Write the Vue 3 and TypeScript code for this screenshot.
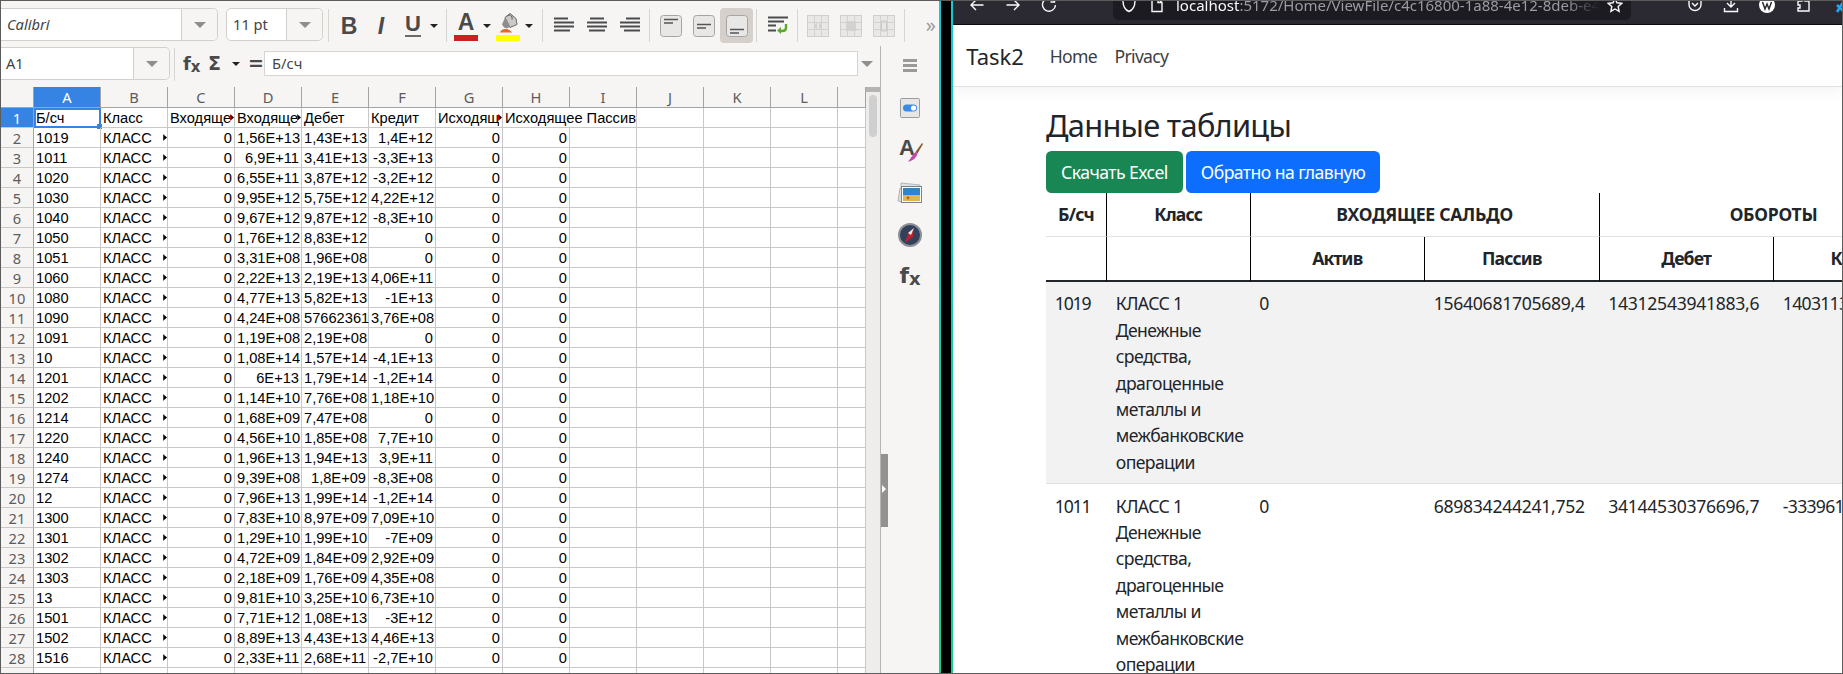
<script setup lang="ts">
interface SheetRow {
  acc: string
  inPas: string
  debit: string
  credit: string
}

const columns = ['A', 'B', 'C', 'D', 'E', 'F', 'G', 'H', 'I', 'J', 'K', 'L']

const sheetRows: SheetRow[] = [
  { acc: '1019', inPas: '1,56E+13', debit: '1,43E+13', credit: '1,4E+12' },
  { acc: '1011', inPas: '6,9E+11', debit: '3,41E+13', credit: '-3,3E+13' },
  { acc: '1020', inPas: '6,55E+11', debit: '3,87E+12', credit: '-3,2E+12' },
  { acc: '1030', inPas: '9,95E+12', debit: '5,75E+12', credit: '4,22E+12' },
  { acc: '1040', inPas: '9,67E+12', debit: '9,87E+12', credit: '-8,3E+10' },
  { acc: '1050', inPas: '1,76E+12', debit: '8,83E+12', credit: '0' },
  { acc: '1051', inPas: '3,31E+08', debit: '1,96E+08', credit: '0' },
  { acc: '1060', inPas: '2,22E+13', debit: '2,19E+13', credit: '4,06E+11' },
  { acc: '1080', inPas: '4,77E+13', debit: '5,82E+13', credit: '-1E+13' },
  { acc: '1090', inPas: '4,24E+08', debit: '57662361', credit: '3,76E+08' },
  { acc: '1091', inPas: '1,19E+08', debit: '2,19E+08', credit: '0' },
  { acc: '10', inPas: '1,08E+14', debit: '1,57E+14', credit: '-4,1E+13' },
  { acc: '1201', inPas: '6E+13', debit: '1,79E+14', credit: '-1,2E+14' },
  { acc: '1202', inPas: '1,14E+10', debit: '7,76E+08', credit: '1,18E+10' },
  { acc: '1214', inPas: '1,68E+09', debit: '7,47E+08', credit: '0' },
  { acc: '1220', inPas: '4,56E+10', debit: '1,85E+08', credit: '7,7E+10' },
  { acc: '1240', inPas: '1,96E+13', debit: '1,94E+13', credit: '3,9E+11' },
  { acc: '1274', inPas: '9,39E+08', debit: '1,8E+09', credit: '-8,3E+08' },
  { acc: '12', inPas: '7,96E+13', debit: '1,99E+14', credit: '-1,2E+14' },
  { acc: '1300', inPas: '7,83E+10', debit: '8,97E+09', credit: '7,09E+10' },
  { acc: '1301', inPas: '1,29E+10', debit: '1,99E+10', credit: '-7E+09' },
  { acc: '1302', inPas: '4,72E+09', debit: '1,84E+09', credit: '2,92E+09' },
  { acc: '1303', inPas: '2,18E+09', debit: '1,76E+09', credit: '4,35E+08' },
  { acc: '13', inPas: '9,81E+10', debit: '3,25E+10', credit: '6,73E+10' },
  { acc: '1501', inPas: '7,71E+12', debit: '1,08E+13', credit: '-3E+12' },
  { acc: '1502', inPas: '8,89E+13', debit: '4,43E+13', credit: '4,46E+13' },
  { acc: '1516', inPas: '2,33E+11', debit: '2,68E+11', credit: '-2,7E+10' },
  { acc: '1520', inPas: '4,57E+12', debit: '3,13E+12', credit: '0' }
]

const classLines = ['КЛАСС 1', 'Денежные', 'средства,', 'драгоценные', 'металлы и', 'межбанковские', 'операции']

const tableRows = [
  { acc: '1019', active: '0', passive: '15640681705689,4', debit: '14312543941883,6', credit: '1403113763805,8' },
  { acc: '1011', active: '0', passive: '689834244241,752', debit: '34144530376696,7', credit: '-33396113213455,0' }
]
</script>

<template>
  <div class="screen">
    <!-- LibreOffice Calc -->
    <section class="calc">
      <div class="toolbar">
        <div class="combo font-combo"><i class="combo-text">Calibri</i><span class="combo-arrow"><b class="tri-gray"></b></span></div>
        <div class="combo size-combo"><span class="combo-text">11 pt</span><span class="combo-arrow"><b class="tri-gray"></b></span></div>
        <span class="sep sep-first"></span>
        <span class="tb tb-text"><span class="glyph-b">B</span></span>
        <span class="tb tb-text"><span class="glyph-i">I</span></span>
        <span class="tb tb-text"><span class="glyph-u">U</span></span>
        <span class="drop"><b class="tri-black"></b></span>
        <span class="sep sep-wide"></span>
        <span class="tb tb-text">
          <span class="color-btn"><span class="glyph-a">A</span><span class="bar bar-red"></span></span>
        </span>
        <span class="drop"><b class="tri-black"></b></span>
        <span class="tb tb-text">
          <span class="color-btn">
            <svg width="22" height="20" viewBox="0 0 22 20">
              <path d="M8 5l5-4 6 5 1 6-7 3z" fill="#c9c9c9" stroke="#6a6a6a" />
              <path d="M10 4c2-3 6-1 5 3" fill="none" stroke="#555" />
              <path d="M5 12l3-7 5 9c-3 3-6 2-8-2z" fill="#8e8e8e" />
              <path d="M3 20c1-4 8-5 12 0z" fill="#e8682a" />
            </svg>
            <span class="bar bar-yellow"></span>
          </span>
        </span>
        <span class="drop"><b class="tri-black"></b></span>
        <span class="sep sep-color"></span>

        <span class="tb"><svg width="20" height="18" viewBox="0 0 20 18"><path d="M0 1.5h14M0 5.5h20M0 9.5h20M0 13.5h16" stroke="#4c4c4c" stroke-width="2" /></svg></span>
        <span class="tb"><svg width="20" height="18" viewBox="0 0 20 18"><path d="M3 1.5h14M0 5.5h20M0 9.5h20M2 13.5h16" stroke="#4c4c4c" stroke-width="2" /></svg></span>
        <span class="tb"><svg width="20" height="18" viewBox="0 0 20 18"><path d="M6 1.5h14M0 5.5h20M0 9.5h20M4 13.5h16" stroke="#4c4c4c" stroke-width="2" /></svg></span>
        <span class="sep"></span>

        <span class="tb"><svg width="22" height="22" viewBox="0 0 22 22"><rect x=".5" y=".5" width="21" height="21" rx="3" fill="#e8e7e5" stroke="#a5a5a5" /><path d="M4 4.5h14M4 8h9" stroke="#555" stroke-width="1.5" /></svg></span>
        <span class="tb"><svg width="22" height="22" viewBox="0 0 22 22"><rect x=".5" y=".5" width="21" height="21" rx="3" fill="#e8e7e5" stroke="#a5a5a5" /><path d="M4 9.5h14M4 13h9" stroke="#555" stroke-width="1.5" /></svg></span>
        <span class="tb tb-on"><svg width="22" height="22" viewBox="0 0 22 22"><rect x=".5" y=".5" width="21" height="21" rx="3" fill="#e8e7e5" stroke="#a5a5a5" /><path d="M4 14.5h14M4 18h9" stroke="#555" stroke-width="1.5" /></svg></span>
        <span class="sep"></span>

        <span class="tb"><svg width="22" height="20" viewBox="0 0 22 20"><path d="M1 1.5h20M1 5.5h16M1 9.5h8M1 14.5h8" stroke="#4c4c4c" stroke-width="2" /><path d="M19 8v4c0 2-2 3-4 3h-2" fill="none" stroke="#5fa82f" stroke-width="2.4" /><path d="M14 11v7l-4-3.500z" fill="#5fa82f" /></svg></span>
        <span class="sep sep-wrap"></span>

        <span v-for="m in 3" :key="m" class="tb">
          <svg width="22" height="22" viewBox="0 0 22 22">
            <rect x=".5" y=".5" width="21" height="21" fill="#e9e8e6" stroke="#cfcfcf" />
            <path d="M.5 7.500h21M.5 14.500h21M7.500 .5v21M14.500 .5v21" stroke="#d2d2d2" />
            <rect v-if="m === 2" x="6" y="6" width="10" height="10" fill="#d2d2d2" />
            <path v-if="m === 1" d="M10 7l-3 4 3 4zM12 7l3 4-3 4z" fill="#d2d2d2" />
            <path v-if="m === 3" d="M8.500 6h5v10h-5z" fill="none" stroke="#c8c8c8" />
          </svg>
        </span>
        <span class="sep sep-last"></span>
        <span class="more">»</span>
      </div>

      <div class="calc-body">
        <div class="calc-main">
          <div class="formula-bar">
            <div class="combo name-combo"><span class="name-text">A1</span><span class="combo-arrow"><b class="tri-gray"></b></span></div>
            <span class="sep formula-sep"></span>
            <span class="fx">f<sub>x</sub></span>
            <span class="sigma">Σ</span>
            <span class="drop"><b class="tri-black"></b></span>
            <span class="equals">=</span>
            <div class="formula-input">Б/сч</div>
            <b class="tri-gray formula-arrow"></b>
          </div>

          <div class="sheet-wrap">
            <div class="sheet">
              <div class="row col-head">
                <div class="cell corner"></div>
                <div v-for="c in columns" :key="c" class="cell col-label" :class="{ picked: c === 'A' }">{{ c }}</div>
                <div class="cell col-label"></div>
              </div>

              <div class="row">
                <div class="cell row-label picked">1</div>
                <div class="cell current">Б/сч</div>
                <div class="cell">Класс</div>
                <div class="cell clipped"><span>Входящее Актив</span></div>
                <div class="cell clipped"><span>Входящее Пассив</span></div>
                <div class="cell">Дебет</div>
                <div class="cell">Кредит</div>
                <div class="cell clipped"><span>Исходящее Актив</span></div>
                <div class="cell spill">Исходящее Пассив</div>
                <div class="cell"></div>
                <div class="cell"></div>
                <div class="cell"></div>
                <div class="cell"></div>
                <div class="cell"></div>
              </div>

              <div v-for="(r, i) in sheetRows" :key="r.acc" class="row">
                <div class="cell row-label">{{ i + 2 }}</div>
                <div class="cell">{{ r.acc }}</div>
                <div class="cell clipped"><span>КЛАСС</span></div>
                <div class="cell num">0</div>
                <div class="cell num">{{ r.inPas }}</div>
                <div class="cell num">{{ r.debit }}</div>
                <div class="cell num">{{ r.credit }}</div>
                <div class="cell num">0</div>
                <div class="cell num">0</div>
                <div class="cell"></div>
                <div class="cell"></div>
                <div class="cell"></div>
                <div class="cell"></div>
                <div class="cell"></div>
              </div>
            </div>

            <div class="vscroll">
              <span class="vscroll-top"></span>
              <span class="vscroll-thumb"></span>
            </div>
          </div>
        </div>

        <aside class="sidebar">
          <span class="handle"></span>
          <span class="burger"></span>
          <svg class="side-icon" width="22" height="22" viewBox="0 0 22 22">
            <rect x="1.500" y="1.500" width="19" height="19" rx="1" fill="#e6e6e6" stroke="#9c9c9c" />
            <rect x="4" y="7.500" width="14" height="7" rx="3.500" fill="#3b8ae6" />
            <circle cx="14.500" cy="11" r="2.600" fill="#fff" />
          </svg>
          <svg class="side-icon" width="26" height="26" viewBox="0 0 26 26">
            <text x="2" y="18" class="styles-a">A</text>
            <path d="M26 7l-1-1-6.500 9 2 1.500z" fill="#8a5a2c" />
            <path d="M18.500 15l2 1.500c-1 4-4 7-9.500 8.500 2.500-3 4-7 7.500-10z" fill="#c04ba8" />
          </svg>
          <svg class="side-icon" width="26" height="24" viewBox="0 0 26 24">
            <path d="M4 2l19 2v2H4z" fill="#dfe3e6" stroke="#9aa0a5" stroke-width=".7" />
            <path d="M1 20L3 7l4 1-2 13z" fill="#dcdcdc" stroke="#a0a0a0" stroke-width=".7" />
            <rect x="4.500" y="5.500" width="20" height="16" fill="#fff" stroke="#7b8288" />
            <rect x="6" y="7" width="17" height="7" fill="#2f86c7" />
            <rect x="6" y="14" width="17" height="6" fill="#eeb04f" />
            <circle cx="11" cy="17" r="1.400" fill="#d9502c" />
          </svg>
          <svg class="side-icon" width="24" height="24" viewBox="0 0 24 24">
            <circle cx="12" cy="12" r="11" fill="#33405c" stroke="#8c8f94" stroke-width="2" />
            <path d="M16 5l-1 9-8 6 3-10z" fill="#b8222a" />
            <path d="M16 5l-6 5 3 2z" fill="#e9e9e9" />
          </svg>
          <span class="fx fx-side">f<sub>x</sub></span>
        </aside>
      </div>
    </section>

    <div class="divider"></div>

    <!-- Firefox -->
    <section class="browser">
      <div class="chrome">
        <div class="chrome-row">
          <svg class="ci" viewBox="0 0 16 16"><path d="M14.500 8H2M7 3L2 8l5 5" /></svg>
          <svg class="ci" viewBox="0 0 16 16"><path d="M1.500 8H14M9 3l5 5-5 5" /></svg>
          <svg class="ci" viewBox="0 0 16 16"><path d="M13 3.500A6.500 6.500 0 1 0 14.500 8M13.500 1v4h-4" /></svg>
          <div class="url-bar">
            <svg class="ci" viewBox="0 0 16 16"><path d="M8 1.500l6 2c0 6-2 9.500-6 11-4-1.500-6-5-6-11z" /></svg>
            <svg class="ci page-icon" viewBox="0 0 16 16"><path d="M3 1.500h6l4 4v9H3zM9 1.500v4h4" /></svg>
            <div class="url-text"><span class="url-host">localhost</span>:5172/Home/ViewFile/c4c16800-1a88-4e12-8deb-e4c1</div>
            <svg class="ci star" viewBox="0 0 16 16"><path d="M8 1.500l2 4.300 4.700.6-3.500 3.200.9 4.700L8 12l-4.100 2.300.9-4.700L1.300 6.400 6 5.800z" /></svg>
          </div>
          <svg class="ci first-right" viewBox="0 0 16 16"><path d="M2 2.500h12v5a6 6 0 0 1-12 0zM5 6l3 3 3-3" /></svg>
          <svg class="ci" viewBox="0 0 16 16"><path d="M8 1v8.500M4 6l4 4 4-4M1.500 11v3.500h13V11" /></svg>
          <svg class="ci-w" viewBox="0 0 16 16"><circle cx="8" cy="8" r="8" fill="#fff" /><path d="M3.500 5l2.500 7 2-5 2 5 2.500-7" fill="none" stroke="#2b2a33" stroke-width="1.500" /></svg>
          <svg class="ci" viewBox="0 0 16 16"><path d="M3 4h4V2h3v2h4v10H3v-3h2V8H3z" /></svg>
          <svg class="ci ci-blue" viewBox="0 0 16 16"><path d="M2 2h12L6 15M6 8l7 7" /></svg>
        </div>
      </div>

      <nav class="navbar">
        <span class="brand">Task2</span>
        <a class="nav-link">Home</a>
        <a class="nav-link">Privacy</a>
      </nav>

      <main class="content">
        <h2 class="title">Данные таблицы</h2>
        <div class="actions">
          <a class="btn btn-green">Скачать Excel</a>
          <a class="btn btn-blue">Обратно на главную</a>
        </div>

        <table class="data">
          <colgroup>
            <col class="w-acc" />
            <col class="w-class" />
            <col class="w-val" />
            <col class="w-val" />
            <col class="w-val" />
            <col class="w-val" />
          </colgroup>
          <thead>
            <tr class="head-top">
              <th>Б/сч</th>
              <th>Класс</th>
              <th colspan="2" class="caps">ВХОДЯЩЕЕ САЛЬДО</th>
              <th colspan="2" class="caps">ОБОРОТЫ</th>
            </tr>
            <tr class="head-sub">
              <th></th>
              <th></th>
              <th>Актив</th>
              <th>Пассив</th>
              <th>Дебет</th>
              <th>Кредит</th>
            </tr>
          </thead>
          <tbody>
            <tr v-for="(row, i) in tableRows" :key="row.acc" :class="{ striped: i === 0 }">
              <td class="acc">{{ row.acc }}</td>
              <td class="class-name"><div v-for="line in classLines" :key="line">{{ line }}</div></td>
              <td>{{ row.active }}</td>
              <td>{{ row.passive }}</td>
              <td>{{ row.debit }}</td>
              <td class="last">{{ row.credit }}</td>
            </tr>
          </tbody>
        </table>
      </main>
    </section>
  </div>
</template>

<style>
html,
body {
  margin: 0;
  overflow: hidden;
  background: #fff;
}
</style>

<style scoped>
.screen {
  width: 1843px;
  height: 674px;
  box-sizing: border-box;
  border: 1px solid #5c5c5c;
  display: flex;
  overflow: hidden;
  font-family: "Noto Sans", sans-serif;
  background: #000;
}

/* calc window */
.calc {
  width: 938px;
  flex-shrink: 0;
  display: flex;
  flex-direction: column;
  background: #f6f5f4;
  color: #3d3d3d;
}

.toolbar {
  height: 45px;
  flex-shrink: 0;
  box-sizing: border-box;
  padding-top: 7px;
  display: flex;
  align-items: flex-start;
}

.combo {
  height: 33px;
  box-sizing: border-box;
  display: flex;
  background: #fff;
  border: 1px solid #d3cfca;
  border-radius: 5px;
  font-size: 14.67px;
  color: #444;
}

.font-combo {
  width: 217px;
  border-left: none;
  border-radius: 0 5px 5px 0;
}

.size-combo {
  width: 97px;
  margin-left: 8px;
}

.name-combo {
  width: 169px;
  border-left: none;
  border-radius: 0 5px 5px 0;
}

.combo-text {
  flex: 1;
  padding-left: 6px;
  line-height: 31px;
}

.name-text {
  flex: 1;
  padding-left: 5px;
  line-height: 31px;
}

.combo-arrow {
  width: 35px;
  border-left: 1px solid #d3cfca;
  background: #f6f5f4;
  border-radius: 0 5px 5px 0;
  display: flex;
  align-items: center;
  justify-content: center;
}

.tri-gray {
  display: block;
  width: 0;
  height: 0;
  border-left: 6px solid transparent;
  border-right: 6px solid transparent;
  border-top: 6px solid #8e8e8e;
}

.tri-black {
  display: block;
  width: 0;
  height: 0;
  border-left: 4px solid transparent;
  border-right: 4px solid transparent;
  border-top: 4px solid #222;
}

.sep {
  width: 1px;
  height: 33px;
  margin: 1px 4px 0 3px;
  background: #d8d5d1;
  flex-shrink: 0;
}

.sep-first {
  margin-left: 5px;
}

.sep-wide {
  margin-left: 7px;
  margin-right: 3px;
}

.sep-color {
  margin-left: 8px;
}

.sep-wrap {
  margin-right: 3px;
}

.sep-last {
  margin-left: 4px;
}

.tb {
  width: 33px;
  height: 35px;
  flex-shrink: 0;
  display: flex;
  align-items: center;
  justify-content: center;
  border-radius: 4px;
}

.tb-text {
  width: 32px;
}

.tb-on {
  background: #d5d0cc;
}

.drop {
  width: 10px;
  height: 35px;
  flex-shrink: 0;
  display: flex;
  align-items: center;
  justify-content: center;
}

.glyph-b,
.glyph-i,
.glyph-a {
  font-family: "Liberation Sans", sans-serif;
  font-weight: 700;
  font-size: 23px;
  line-height: 22px;
  color: #4a4a4a;
}

.glyph-i {
  font-style: italic;
}

.glyph-u {
  font-family: "Liberation Sans", sans-serif;
  font-size: 22px;
  font-weight: 700;
  line-height: 20px;
  color: #4a4a4a;
  padding-bottom: 1px;
  border-bottom: 2px solid #6a6a6a;
}

.color-btn {
  display: flex;
  flex-direction: column;
  align-items: center;
  height: 29px;
  margin-top: 2px;
}

.color-btn svg {
  height: 21px;
  display: block;
}

.glyph-a {
  line-height: 21px;
  height: 21px;
}

.bar {
  width: 24px;
  height: 6px;
  margin-top: 2px;
}

.bar-red {
  background: #c9211e;
}

.bar-yellow {
  background: #ffff00;
}

.more {
  margin-left: auto;
  margin-right: 3px;
  font-size: 20px;
  line-height: 33px;
  color: #9a9a9a;
}

.calc-body {
  flex: 1;
  min-height: 0;
  display: flex;
}

.calc-main {
  width: 879px;
  flex-shrink: 0;
  display: flex;
  flex-direction: column;
}

.formula-bar {
  height: 41px;
  flex-shrink: 0;
  box-sizing: border-box;
  padding-top: 1px;
  display: flex;
  align-items: flex-start;
}

.formula-sep {
  margin-left: 4px;
  margin-right: 8px;
}

.fx {
  font-family: "DejaVu Sans", sans-serif;
  font-weight: 700;
  font-size: 18px;
  line-height: 33px;
  width: 23px;
  color: #4a4a4a;
}

.fx sub {
  font-size: 15px;
  vertical-align: baseline;
  position: relative;
  top: 2px;
}

.sigma {
  font-family: "DejaVu Sans", sans-serif;
  font-weight: 700;
  font-size: 19px;
  line-height: 33px;
  width: 20px;
  margin-left: 2px;
  color: #4a4a4a;
}

.formula-bar .drop {
  height: 33px;
  margin-left: 3px;
}

.equals {
  font-family: "DejaVu Sans", sans-serif;
  font-weight: 700;
  font-size: 19px;
  line-height: 33px;
  margin-left: 7px;
  width: 16px;
  color: #4a4a4a;
}

.formula-input {
  width: 594px;
  height: 25px;
  margin-top: 4px;
  box-sizing: border-box;
  background: #fff;
  border: 1px solid #d8d5d1;
  padding-left: 7px;
  font-size: 14.67px;
  line-height: 23px;
  color: #444;
}

.formula-arrow {
  margin: 14px 0 0 3px;
}

.sheet-wrap {
  flex: 1;
  min-height: 0;
  display: flex;
}

.sheet {
  width: 865px;
  flex-shrink: 0;
  overflow: hidden;
  background: #fff;
}

.row {
  display: grid;
  grid-template-columns: 33px repeat(12, 67px) 1fr;
  height: 20px;
}

.cell {
  position: relative;
  box-sizing: border-box;
  height: 20px;
  padding: 0 2px;
  border-right: 1px solid #c8c8c8;
  border-bottom: 1px solid #c8c8c8;
  font-family: "Liberation Sans", Arial, sans-serif;
  font-size: 14.67px;
  line-height: 20px;
  color: #000;
  white-space: nowrap;
}

.num {
  text-align: right;
}

.col-head {
  height: 21px;
}

.col-head .cell {
  height: 21px;
}

.corner,
.col-label {
  background: #f6f5f4;
  border-right-color: #a3a3a3;
  border-bottom-color: #a3a3a3;
}

.col-label {
  font-family: "Noto Sans", sans-serif;
  text-align: center;
  color: #5c5c5c;
}

.row-label {
  background: #f6f5f4;
  border-right-color: #a3a3a3;
  border-bottom-color: #c8c8c8;
  font-family: "Noto Sans", sans-serif;
  text-align: center;
  color: #5c5c5c;
  padding: 0;
}

.picked {
  background: #3584e4;
  color: #fff;
}

.current {
  outline: 2px solid #3584e4;
  outline-offset: -2px;
}

.current::after {
  content: "";
  position: absolute;
  right: -2px;
  bottom: -2px;
  width: 5px;
  height: 5px;
  background: #3584e4;
}

.clipped span {
  display: block;
  width: 61px;
  overflow: hidden;
}

.clipped::after {
  content: "";
  position: absolute;
  right: 0;
  top: 6px;
  width: 4px;
  height: 7px;
  background: linear-gradient(90deg, #c00 35%, #000 35%);
  clip-path: polygon(0 0, 100% 50%, 0 100%);
}

.spill {
  border-right: none;
}

.vscroll {
  width: 14px;
  flex-shrink: 0;
  background: #eeedec;
  display: flex;
  flex-direction: column;
  align-items: center;
}

.vscroll-top {
  width: 14px;
  height: 5px;
  background: #b4b4b4;
}

.vscroll-thumb {
  width: 8px;
  height: 42px;
  margin-top: 3px;
  background: #cfcfcf;
  border-radius: 4px;
}

.sidebar {
  position: relative;
  width: 59px;
  flex-shrink: 0;
  box-sizing: border-box;
  border-left: 1px solid #b5b5b5;
  display: flex;
  flex-direction: column;
  align-items: center;
  padding-top: 13px;
}

.handle {
  position: absolute;
  left: 0;
  top: 408px;
  width: 7px;
  height: 73px;
  background: #929292;
}

.handle::after {
  content: "";
  position: absolute;
  left: 1px;
  top: 31px;
  border-left: 4px solid #fff;
  border-top: 4px solid transparent;
  border-bottom: 4px solid transparent;
}

.burger {
  width: 14px;
  height: 3px;
  background: #9a9a9a;
  box-shadow: 0 5px 0 #9a9a9a, 0 10px 0 #9a9a9a;
  margin-bottom: 35px;
}

.side-icon {
  display: block;
  margin-bottom: 18px;
}

.styles-a {
  font-family: "Liberation Sans", sans-serif;
  font-weight: 700;
  font-size: 22px;
  fill: #4a4a4a;
}

.fx-side {
  font-size: 22px;
  width: auto;
  line-height: 24px;
  margin-top: -1px;
}

.fx-side sub {
  font-size: 18px;
}

.divider {
  width: 14px;
  flex-shrink: 0;
  box-sizing: border-box;
  border-left: 2px solid;
  border-image: linear-gradient(#17c8d2, #12d08e) 1;
  border-right: 2px solid #333;
  background: #000;
}

/* browser */
.browser {
  flex: 1;
  min-width: 0;
  display: flex;
  flex-direction: column;
  overflow: hidden;
  background: #fff;
  color: #212529;
}

.chrome {
  height: 24px;
  flex-shrink: 0;
  box-sizing: border-box;
  background: #2b2a33;
  border-bottom: 1px solid #0c0c0d;
  overflow: hidden;
}

.chrome-row {
  height: 30px;
  margin-top: -11px;
  padding-left: 16px;
  display: flex;
  align-items: center;
  gap: 20px;
}

.ci {
  width: 16px;
  height: 16px;
  flex-shrink: 0;
  fill: none;
  stroke: #fbfbfe;
  stroke-width: 1.4;
}

.ci-w {
  width: 16px;
  height: 16px;
  flex-shrink: 0;
}

.ci-blue {
  stroke: #1ea7f2;
  stroke-width: 2.6;
}

.url-bar {
  width: 518px;
  height: 30px;
  flex-shrink: 0;
  margin-left: 36px;
  margin-right: 36px;
  box-sizing: border-box;
  padding: 0 8px;
  background: #1c1b22;
  border-radius: 5px;
  display: flex;
  align-items: center;
  color: #9c9ba3;
  font-size: 15px;
}

.page-icon {
  margin-left: 12px;
}

.url-text {
  flex: 1;
  min-width: 0;
  margin-left: 11px;
  white-space: nowrap;
  overflow: hidden;
  -webkit-mask-image: linear-gradient(90deg, #000 92%, transparent);
  mask-image: linear-gradient(90deg, #000 92%, transparent);
}

.url-host {
  color: #fbfbfe;
}

.star {
  margin-left: 8px;
}

.navbar {
  height: 62px;
  flex-shrink: 0;
  box-sizing: border-box;
  padding: 0 13.2px;
  display: flex;
  align-items: center;
  border-bottom: 1px solid #dee2e6;
  box-shadow: 0 4px 13px rgba(0, 0, 0, 0.05);
}

.brand {
  font-size: 22px;
  margin-right: 17px;
  color: #212529;
}

.nav-link {
  padding: 0 8.8px;
  font-size: 17.6px;
  letter-spacing: -0.7px;
  color: #3a3f44;
}

.content {
  flex: 1;
  min-height: 0;
  padding: 17px 0 0 93px;
  overflow: hidden;
}

.title {
  margin: 0 0 5px;
  font-size: 30.8px;
  font-weight: 400;
  line-height: 42px;
  letter-spacing: -0.7px;
}

.actions {
  display: flex;
  gap: 3px;
}

.btn {
  padding: 6.6px 14px;
  border-radius: 5.5px;
  border: 1.1px solid transparent;
  font-size: 17.6px;
  line-height: 26.4px;
  color: #fff;
}

.btn-green {
  background: #198754;
  letter-spacing: -0.55px;
}

.btn-blue {
  background: #0d6efd;
  letter-spacing: -0.55px;
}

.data {
  table-layout: fixed;
  width: 840.5px;
  border-collapse: separate;
  border-spacing: 0;
  font-size: 17.6px;
  line-height: 26.4px;
}

.w-acc {
  width: 61px;
}

.w-class {
  width: 143.5px;
}

.w-val {
  width: 174.500px;
}

th,
td {
  padding: 8.8px;
  box-sizing: border-box;
  text-align: left;
  vertical-align: top;
  white-space: nowrap;
}

th {
  padding-top: 8.3px;
  padding-bottom: 8.3px;
  text-align: center;
  font-weight: 700;
  letter-spacing: -0.8px;
  border-right: 1px solid #000;
}

th.caps {
  letter-spacing: -0.25px;
}

.head-top th {
  border-bottom: 1px solid #dee2e6;
}

.head-sub th {
  border-bottom: 2px solid #212529;
}

td {
  padding-bottom: 7.6px;
  letter-spacing: -0.3px;
  border-bottom: 1px solid #dee2e6;
}

td.acc {
  letter-spacing: -1.2px;
}

td.class-name {
  letter-spacing: -0.6px;
}

td.last {
  letter-spacing: -0.7px;
}

.striped td {
  background: #f2f2f2;
}
</style>
